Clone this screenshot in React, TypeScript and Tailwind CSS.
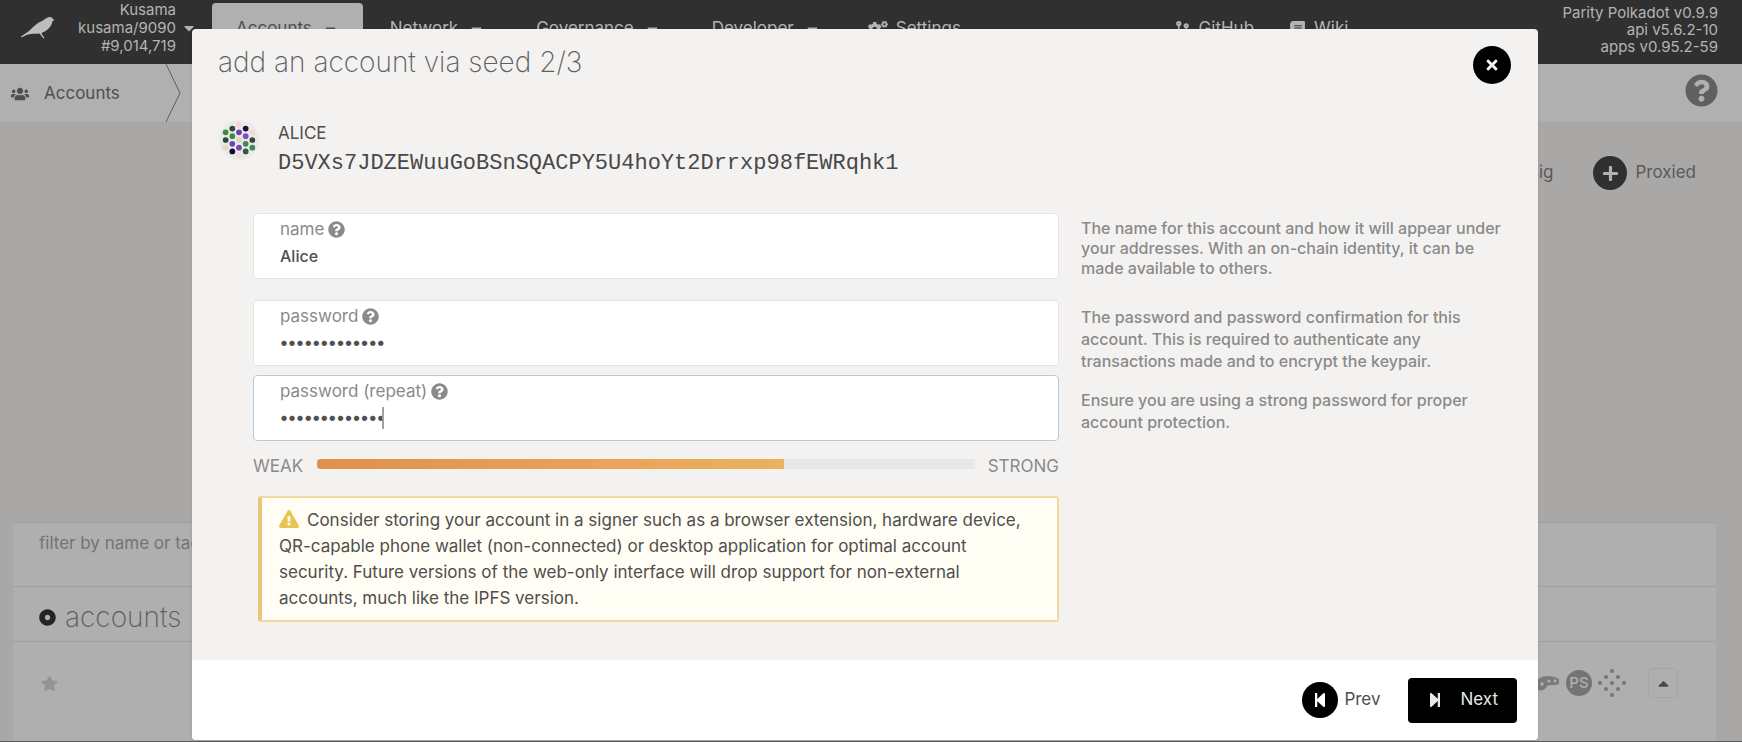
import { useState } from "react";
import {
  FaBook,
  FaCaretDown,
  FaCaretUp,
  FaCodeBranch,
  FaCogs,
  FaDotCircle,
  FaExclamationTriangle,
  FaPlus,
  FaQuestionCircle,
  FaStar,
  FaStepBackward,
  FaStepForward,
  FaTimes,
  FaUsers,
} from "react-icons/fa";

const menus = ["Network", "Governance", "Developer"];

// x, y, colour of every dot in the account icon
const dots: [number, number, string][] = [
  [21, 5, "#f3d9cf"],
  [14, 9, "#2f4a3a"],
  [28, 9, "#1c0a45"],
  [7, 13, "#3f8a45"],
  [21, 13, "#6a45a8"],
  [35, 13, "#f5d5d5"],
  [14, 17, "#3f8a45"],
  [28, 17, "#7a4fc9"],
  [7, 21, "#2f4545"],
  [21, 21, "#e3d3c9"],
  [35, 21, "#2f4a3a"],
  [14, 25, "#6a45b8"],
  [28, 25, "#3f8a45"],
  [7, 29, "#e0dcb8"],
  [21, 29, "#7a45b0"],
  [35, 29, "#3f8a5a"],
  [14, 33, "#120533"],
  [28, 33, "#2f5a3a"],
  [21, 37, "#f0dccf"],
];

function Identicon() {
  return (
    <svg viewBox="-1 -1 44 44" className="h-[42px] w-[42px]">
      <circle cx="21" cy="21" r="21" fill="#ebeae8" />
      {dots.map(([x, y, fill]) => (
        <circle key={`${x}-${y}`} cx={x} cy={y} r="3" fill={fill} />
      ))}
    </svg>
  );
}

function Bird() {
  return (
    <svg viewBox="0 0 36 24" className="h-6 w-9" fill="#bdbdbd">
      <path d="M1 20.500 L9 15 C13 11 17 7 22 5 C25 3.500 26 1.500 29 1 C31 0.800 32.500 1.800 33 3 L34.500 4 L32.500 5 C32 9 29 14 22.500 16.500 L21.500 17.500 L24.500 22 L23.500 22.500 L19.500 17.500 C15 18 12 17.500 8 18.500 C5 19.500 3 21 1 21.300 Z" />
    </svg>
  );
}

function DotGrid() {
  const steps = [0, 1, 2];
  return (
    <svg viewBox="0 0 28 28" className="h-7 w-7" fill="#777">
      {steps.map((a) =>
        steps.map((b) => (
          <circle
            key={`${a}-${b}`}
            cx={14 + (a - b) * 6}
            cy={2 + (a + b) * 6}
            r="2"
          />
        ))
      )}
    </svg>
  );
}

type FieldProps = {
  id: string;
  label: string;
  type?: string;
  value: string;
  onChange: (value: string) => void;
  active?: boolean;
};

function Field({ id, label, type = "text", value, onChange, active }: FieldProps) {
  return (
    <div
      className={`relative h-[66px] rounded border bg-white px-[26px] pt-1 ${
        active ? "border-[#b5cbdc]" : "border-[#e6e3e1]"
      }`}
    >
      <label
        htmlFor={id}
        className="flex items-center gap-1 text-[17px] leading-[22px] text-[#8a8a8a]"
      >
        {label}
        <FaQuestionCircle />
      </label>
      <input
        id={id}
        type={type}
        value={value}
        onChange={(e) => onChange(e.target.value)}
        className={`mt-1 block h-6 w-full bg-transparent text-[#505050] outline-none ${
          type === "password" ? "text-[17px] font-bold" : "text-base font-medium"
        }`}
      />
      {active && (
        <span className="absolute top-[31px] left-[128px] h-[22px] w-[2px] bg-[#a0a0a0]" />
      )}
    </div>
  );
}

function App() {
  const [name, setName] = useState("Alice");
  const [password, setPassword] = useState("correcthorse1");
  const [repeat, setRepeat] = useState("correcthorse1");
  const strength = 71;

  return (
    <div className="relative flex min-h-screen flex-col overflow-hidden border-b border-[#5c5c5c] bg-[#a9a8a7] font-['Inter',sans-serif] text-[17px] text-[#4e4e4e]">
      <header className="flex h-16 items-start bg-[#303030] pr-6 text-[#b4b4b4]">
        <div className="flex w-[212px] items-start pl-5">
          <div className="pt-4">
            <Bird />
          </div>
          <p className="ml-auto pt-[1px] text-right text-[15px] leading-[18px]">
            Kusama
            <br />
            kusama/9090
            <br />
            #9,014,719
          </p>
          <FaCaretDown className="mt-[20px] mr-[15px] ml-[5px] text-base" />
        </div>

        <nav className="flex flex-1 gap-[3px] pt-[3px]">
          <a href="#accounts" className="flex h-[52px] items-center gap-[10px] rounded-t bg-[#b0b0b0] px-6 text-[#4e4e4e]">
            Accounts
            <FaCaretDown />
          </a>
          {menus.map((menu) => (
            <a key={menu} href={`#${menu}`} className="flex h-[52px] items-center gap-[10px] px-6">
              {menu}
              <FaCaretDown />
            </a>
          ))}
          <a href="#settings" className="flex h-[52px] items-center gap-2 px-5">
            <FaCogs className="text-xl" />
            Settings
          </a>
          <a href="#github" className="ml-auto flex h-[52px] items-center gap-2 px-5">
            <FaCodeBranch />
            GitHub
          </a>
          <a href="#wiki" className="mr-[190px] flex h-[52px] items-center gap-2 pr-6 pl-3">
            <FaBook />
            Wiki
          </a>
        </nav>

        <p className="pt-[4px] text-right text-[15px] leading-[17px]">
          Parity Polkadot v0.9.9
          <br />
          api v5.6.2-10
          <br />
          apps v0.95.2-59
        </p>
      </header>

      <div className="flex h-[58px] items-center bg-[#b0b0b0] pr-6">
        <a href="#accounts" className="flex items-center gap-[15px] pt-[2px] pl-[11px]">
          <FaUsers className="text-lg" />
          Accounts
        </a>
        <svg viewBox="0 0 16 58" className="ml-[45px] h-[58px] w-4" fill="none" stroke="#5e5e5e">
          <path d="M1 0 L15 29 L1 58" />
        </svg>
        <FaQuestionCircle className="mb-[6px] ml-auto text-[33px] text-[#606060]" />
      </div>

      <div className="flex justify-end gap-10 pt-[34px] pr-[46px] text-[#5a5a5a]">
        <button className="flex items-center gap-2">
          <span className="flex h-[34px] w-[34px] items-center justify-center rounded-full bg-[#303030] text-[#b0b0b0]">
            <FaPlus />
          </span>
          Multisig
        </button>
        <button className="flex items-center gap-2">
          <span className="flex h-[34px] w-[34px] items-center justify-center rounded-full bg-[#303030] text-[#b0b0b0]">
            <FaPlus />
          </span>
          Proxied
        </button>
      </div>

      <section className="mt-auto mr-[26px] ml-[13px] border-t border-[#9f9f9f] bg-[#afafaf]">
        <div className="h-16 border-b border-[#9f9f9f] px-[26px] pt-2">
          <input
            aria-label="filter"
            placeholder="filter by name or tags"
            className="w-full bg-transparent text-[17px] placeholder:text-[#747474]"
          />
        </div>
        <h2 className="flex h-[55px] items-center gap-[9px] border-b border-[#9f9f9f] px-[26px] pt-[6px] text-[28px] font-extralight text-[#5e5e5e]">
          <FaDotCircle className="text-[17px] text-[#242424]" />
          accounts
        </h2>
        <div className="flex h-[99px] items-start px-7 pt-6 pr-[38px]">
          <FaStar className="mt-[9px] text-[17px] text-[#949494]" />
          <div className="ml-auto flex h-[34px] items-center gap-[6px]">
            <svg viewBox="0 0 30 18" className="h-[18px] w-[30px]" fill="#7a7a7a">
              <path d="M6 8 C10 1 20 0 29 5 L29 10 C24 12 20 10 17 12 C15 17 9 18 6 14 Z" />
              <circle cx="12" cy="10" r="1.800" fill="#afafaf" />
              <circle cx="19" cy="7" r="1.600" fill="#afafaf" />
              <circle cx="25" cy="7" r="1.400" fill="#afafaf" />
            </svg>
            <span className="flex h-[26px] w-[26px] items-center justify-center rounded-full bg-[#747474] text-[15px] font-medium text-[#afafaf]">
              PS
            </span>
            <DotGrid />
            <button
              aria-label="collapse"
              className="ml-4 flex h-[30px] w-[30px] items-center justify-center rounded border border-[#a6a6a6] text-[#4a4a4a]"
            >
              <FaCaretUp />
            </button>
          </div>
        </div>
      </section>

      <div className="absolute inset-0 pt-[29px] pr-[204px] pb-[1px] pl-48">
        <div
          role="dialog"
          aria-label="add an account via seed"
          className="flex h-full flex-col overflow-hidden rounded bg-[#f3f2f1] shadow"
        >
          <div className="flex items-start justify-between pr-[27px] pl-[26px]">
            <h1 className="pt-[12px] text-[28px] leading-[42px] font-extralight text-[#606060]">
              add an account via seed 2/3
            </h1>
            <button
              aria-label="close"
              className="mt-[17px] flex h-[38px] w-[38px] items-center justify-center rounded-full bg-black text-base text-[#f3f2f1]"
            >
              <FaTimes />
            </button>
          </div>

          <div className="mt-[35px] flex gap-[18px] pl-[26px]">
            <Identicon />
            <div className="pt-[2px]">
              <p className="text-[17px] leading-[24px]">ALICE</p>
              <p className="font-['Liberation_Mono',monospace] text-[22px] leading-[38px] text-[#484848]">
                D5VXs7JDZEWuuGoBSnSQACPY5U4hoYt2Drrxp98fEWRqhk1
              </p>
            </div>
          </div>

          <form className="mt-[30px] flex flex-col pr-[26px] pl-[61px]">
            <div className="flex gap-[22px]">
              <div className="flex-1">
                <Field id="name" label="name" value={name} onChange={setName} />
              </div>
              <p className="w-[431px] pt-[5px] text-base leading-[20px] font-medium text-[#8a8a8a]">
                The name for this account and how it will appear under your
                addresses. With an on-chain identity, it can be made available
                to others.
              </p>
            </div>

            <div className="mt-[21px] flex gap-[22px]">
              <div className="flex-1">
                <Field
                  id="password"
                  label="password"
                  type="password"
                  value={password}
                  onChange={setPassword}
                />
                <div className="mt-[9px]">
                  <Field
                    id="repeat"
                    label="password (repeat)"
                    type="password"
                    value={repeat}
                    onChange={setRepeat}
                    active
                  />
                </div>

                <div className="mt-[14px] flex items-center leading-[22px] text-[#8a8a8a]">
                  WEAK
                  <div className="mr-[13px] mb-1 ml-[14px] h-[10px] flex-1 bg-[#e8e8e9]">
                    <div
                      className="h-full rounded-l-sm bg-linear-to-r from-[#e0904a] to-[#ecb060]"
                      style={{ width: `${strength}%` }}
                    />
                  </div>
                  STRONG
                </div>

                <div className="mt-[19px] ml-[5px] rounded-[3px] border-2 border-l-4 border-[#f0d8a0] border-l-[#e8c878] bg-[#fffdf4] px-[17px] py-[9px] leading-[26px]">
                  <FaExclamationTriangle className="mr-2 mb-1 inline text-xl text-[#e6c650]" />
                  Consider storing your account in a signer such as a browser
                  extension, hardware device, QR-capable phone wallet
                  (non-connected) or desktop application for optimal account
                  security. Future versions of the web-only interface will drop
                  support for non-external accounts, much like the IPFS version.
                </div>
              </div>

              <div className="flex w-[431px] flex-col gap-[17px] pt-[6px] text-base font-medium text-[#8a8a8a]">
                <p className="leading-[22px]">
                  The password and password confirmation for this account. This
                  is required to authenticate any transactions made and to
                  encrypt the keypair.
                </p>
                <p className="leading-[22px]">
                  Ensure you are using a strong password for proper account
                  protection.
                </p>
              </div>
            </div>
          </form>

          <div className="mt-auto flex h-20 items-center justify-end gap-7 bg-white pr-[21px]">
            <button className="flex items-center gap-[6px]">
              <span className="flex h-9 w-9 items-center justify-center rounded-full bg-black text-base text-white">
                <FaStepBackward />
              </span>
              Prev
            </button>
            <button className="flex h-[45px] items-center gap-[17px] rounded bg-black px-[19px] text-[#e8e8e8]">
              <FaStepForward className="text-base" />
              Next
            </button>
          </div>
        </div>
      </div>
    </div>
  );
}

export default App;
